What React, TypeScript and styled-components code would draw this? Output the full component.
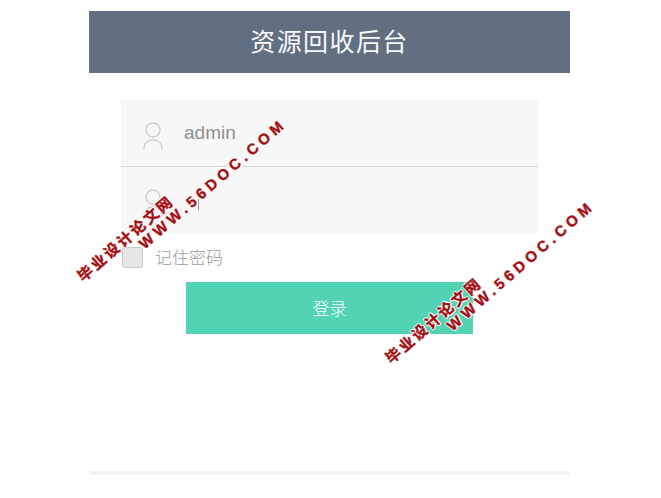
import React from "react";
import styled, { createGlobalStyle } from "styled-components";

const Global = createGlobalStyle`
  html, body { margin: 0; padding: 0; background: #fff; }
  body { font-family: "Liberation Sans", "Noto Sans CJK SC", sans-serif; }
`;

const Page = styled.div`
  position: relative;
  width: 661px;
  height: 498px;
  overflow: hidden;
  background: #fff;
`;

const Panel = styled.main`
  width: 481px;
  height: 460px;
  margin-left: 89px;
  padding-top: 11px;
  display: flex;
  flex-direction: column;
  border-bottom: 4px solid #f1f2f7;
`;

const Header = styled.header`
  height: 62px;
  padding-bottom: 4px;
  box-sizing: border-box;
  background: #616f81;
  color: #f7f9fa;
  font-family: "Noto Sans CJK SC", sans-serif;
  font-size: 25px;
  font-weight: 400;
  letter-spacing: 1.4px;
  display: flex;
  align-items: center;
  justify-content: center;
  flex: none;
`;

const Form = styled.form`
  margin: 27px 32px 0;
  display: flex;
  flex-direction: column;
`;

const Fields = styled.div`
  background: #f7f7f7;
  display: flex;
  flex-direction: column;
`;

const Field = styled.div<{ $divided?: boolean }>`
  height: 66px;
  display: flex;
  align-items: center;
  padding-left: 22px;
  gap: 21px;
  border-bottom: ${(p) => (p.$divided ? "1px solid #d8d8d8" : "0")};
`;

const FieldIcon = styled.svg`
  width: 20px;
  height: 28px;
  margin-top: 6px;
  fill: none;
  stroke: #cfcfcf;
  stroke-width: 1.5;
  flex: none;
`;

const Value = styled.span`
  font-size: 19px;
  color: #8f8f8f;
  margin-top: 0;
`;

const Caret = styled.span`
  width: 1px;
  height: 11px;
  background: #9a9a9a;
  margin: 8px 0 0 14px;
`;

const Remember = styled.label`
  display: flex;
  align-items: center;
  gap: 12px;
  margin: 14px 0 0 1px;
  height: 21px;
  font-size: 17px;
  line-height: 21px;
  color: #9c9c9c;
  font-family: "Noto Sans CJK SC", sans-serif;
  font-weight: 300;
`;

const RememberText = styled.span`
  margin-top: -3px;
`;

const Check = styled.span`
  width: 19px;
  height: 19px;
  margin-top: -1px;
  border: 1px solid #c9c9c9;
  border-radius: 3px;
  background: #e6e6e6;
  flex: none;
`;

const Submit = styled.button`
  align-self: flex-start;
  margin: 14px 0 0 65px;
  width: 287px;
  height: 52px;
  border: 0;
  background: #52d3b4;
  color: #fff;
  font-family: "Noto Sans CJK SC", sans-serif;
  font-weight: 300;
  font-size: 17px;
  padding: 0 0 2px;
`;

const Mark = styled.div<{ $x: number; $y: number; $size: number; $spacing: number; $family?: string }>`
  position: absolute;
  left: ${(p) => p.$x}px;
  top: ${(p) => p.$y}px;
  transform: rotate(-41deg);
  transform-origin: left center;
  white-space: nowrap;
  color: #a30f12;
  font-family: ${(p) => p.$family ?? '"Liberation Sans", sans-serif'};
  font-weight: 700;
  font-size: ${(p) => p.$size}px;
  line-height: 1;
  letter-spacing: ${(p) => p.$spacing}px;
  -webkit-text-stroke: 0.4px #a30f12;
  text-shadow: 1px 0 0 #fff, -1px 0 0 #fff, 0 1px 0 #fff, 0 -1px 0 #fff, 1px 1px 0 #fff, -1px -1px 0 #fff, 1px -1px 0 #fff, -1px 1px 0 #fff;
`;

const Watermark = ({ x, y }: { x: number; y: number }) => (
  <>
    <Mark $x={x} $y={y} $size={15} $spacing={2.4} $family={'"Noto Sans CJK SC", sans-serif'}>毕业设计论文网</Mark>
    <Mark $x={x + 62} $y={y - 32} $size={15} $spacing={4.2}>WWW.56DOC.COM</Mark>
  </>
);

const UserIcon = () => (
  <FieldIcon viewBox="0 0 20 28">
    <circle cx="10" cy="8" r="7" />
    <path d="M1 27c0-6 4-9 9-9s9 3 9 9" />
  </FieldIcon>
);

export default function App() {
  return (
    <Page>
      <Global />
      <Panel>
        <Header>资源回收后台</Header>
        <Form>
          <Fields>
            <Field $divided>
              <UserIcon />
              <Value>admin</Value>
            </Field>
            <Field>
              <UserIcon />
              <Caret />
            </Field>
          </Fields>
          <Remember>
            <Check />
            <RememberText>记住密码</RememberText>
          </Remember>
          <Submit type="button">登录</Submit>
        </Form>
      </Panel>
      <Watermark x={79} y={270} />
      <Watermark x={387} y={352} />
    </Page>
  );
}
